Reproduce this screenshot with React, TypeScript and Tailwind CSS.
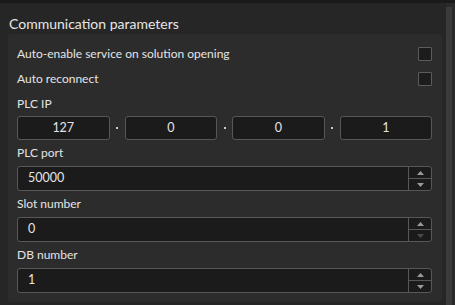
import type { ReactNode } from "react";

const font = { fontFamily: 'Lato, "Noto Sans", "Liberation Sans", sans-serif' };

function Checkbox() {
  return <span className="h-[14px] w-[14px] rounded-[1px] border border-[#5c5c5c] bg-[#1c1c1c]" />;
}

function Label({ children, h = "h-[25px]" }: { children: ReactNode; h?: string }) {
  return <div className={`flex ${h} items-center text-[12px] text-[#e4e4e4]`}>{children}</div>;
}

function Arrow({ up, dim }: { up?: boolean; dim?: boolean }) {
  return (
    <svg width="7" height="4" viewBox="0 0 7 4" className={dim ? "text-[#4a4a4a]" : "text-[#9a9a9a]"}>
      <path d={up ? "M0 4 L3.5 0 L7 4 Z" : "M0 0 L3.5 4 L7 0 Z"} fill="currentColor" />
    </svg>
  );
}

function Spin({ value, downDim }: { value: string; downDim?: boolean }) {
  return (
    <div className="flex h-[25px] rounded-[3px] border border-[#575757] bg-[#1b1b1b] text-[12.5px] text-[#e4e4e4]">
      <div className="flex flex-1 items-center pl-[10px]">{value}</div>
      <div className="flex w-[23px] flex-col border-l border-[#575757]">
        <div className="flex flex-1 items-center justify-center border-b border-[#575757]">
          <Arrow up />
        </div>
        <div className="flex flex-1 items-center justify-center">
          <Arrow dim={downDim} />
        </div>
      </div>
    </div>
  );
}

function IpBox({ value }: { value: string }) {
  return (
    <div className="flex h-[24px] flex-1 items-center justify-center rounded-[3px] border border-[#575757] bg-[#1b1b1b] text-[12.5px] text-[#e4e4e4]">
      {value}
    </div>
  );
}

function Dot() {
  return (
    <div className="flex w-[15px] items-center justify-center">
      <span className="h-[2px] w-[2px] bg-[#c8c8c8]" />
    </div>
  );
}

export default function App() {
  return (
    <div className="flex h-[305px] w-[455px] flex-col overflow-hidden bg-[#262626]" style={font}>
      <div className="h-[3px] bg-[#1a1a1a]" />
      <div className="flex flex-1">
        <div className="flex flex-1 flex-col">
          <div className="flex h-[31px] items-center pl-[9px] pt-[10px] text-[14px] text-[#e6e6e6]">
            Communication parameters
          </div>
          <div className="ml-[8px] mr-[4px] flex flex-col rounded-[3px] bg-[#2c2c2c] pb-[9px] pl-[9px] pr-[10px] pt-[7px]">
            <Label>
              <span className="flex-1">Auto-enable service on solution opening</span>
              <Checkbox />
            </Label>
            <Label>
              <span className="flex-1">Auto reconnect</span>
              <Checkbox />
            </Label>
            <Label>PLC IP</Label>
            <div className="flex">
              <IpBox value="127" />
              <Dot />
              <IpBox value="0" />
              <Dot />
              <IpBox value="0" />
              <Dot />
              <IpBox value="1" />
            </div>
            <Label h="h-[26px]">PLC port</Label>
            <Spin value="50000" />
            <Label h="h-[26px]">Slot number</Label>
            <Spin value="0" downDim />
            <Label h="h-[26px]">DB number</Label>
            <Spin value="1" />
          </div>
        </div>
        <div className="flex w-[9px] bg-[#2a2a2a] pt-[4px]">
          <div className="w-[6px] bg-[#3b3b3b]" />
        </div>
      </div>
    </div>
  );
}
